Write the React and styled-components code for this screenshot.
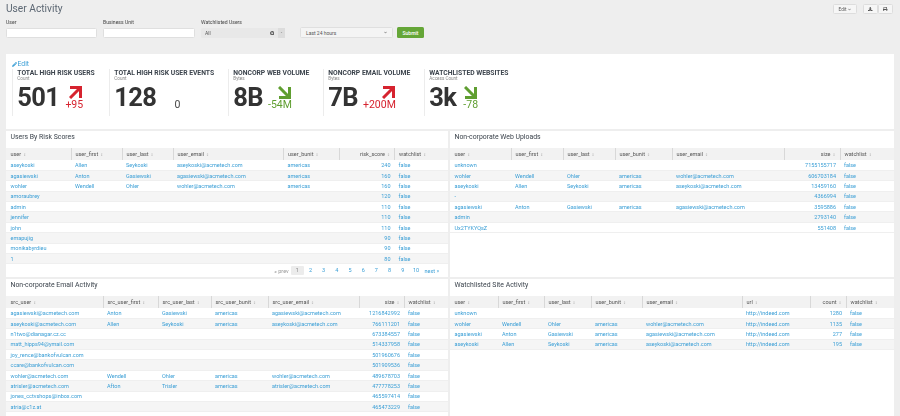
import React from 'react';
import styled, { createGlobalStyle } from 'styled-components';
import { FaPencilAlt, FaDownload, FaPrint, FaTimesCircle, FaChevronDown, FaCaretDown } from 'react-icons/fa';

const GlobalStyle = createGlobalStyle`
  html, body {
    margin: 0;
    height: 416px;
    overflow: hidden;
    background: #eeeeee;
    font-family: Roboto, "Liberation Sans", sans-serif;
  }
`;

const Page = styled.div`
  width: 900px;
  height: 416px;
  overflow: hidden;
  box-sizing: border-box;
  padding: 0 6px;
  filter: blur(0.3px);
`;

const Header = styled.header`
  display: flex;
  justify-content: space-between;
  height: 18px;
`;

const Title = styled.h1`
  margin: 0;
  font-size: 10.2px;
  font-weight: 400;
  line-height: 17px;
  color: #5c6773;
`;

const HeaderActions = styled.div`
  display: flex;
  gap: 6px;
  padding: 4px 1px 0 0;
`;

const GhostButton = styled.button`
  display: flex;
  align-items: center;
  justify-content: center;
  gap: 2px;
  width: ${(p) => p.$w}px;
  height: 10px;
  padding: 0;
  border: 1px solid #dddddd;
  border-radius: 1.5px;
  background: #f6f6f6;
  color: #555555;
  font: 400 4.6px Roboto, sans-serif;
`;

const ButtonGroup = styled.div`
  display: flex;
`;

const FilterBar = styled.form`
  display: flex;
  align-items: flex-end;
  height: 36px;
  padding-top: 3px;
  box-sizing: border-box;
  align-content: flex-start;
`;

const Field = styled.div`
  display: flex;
  flex-direction: column;
  width: ${(p) => p.$w}px;
  margin-right: ${(p) => p.$gap}px;
  padding-bottom: 16px;
`;

const FieldLabel = styled.label`
  height: 6px;
  margin-bottom: 3px;
  font-size: 5.1px;
  line-height: 6px;
  color: #444444;
`;

const TextInput = styled.div`
  height: 10px;
  box-sizing: border-box;
  background: #ffffff;
  border: 1px solid #dfdfdf;
  border-radius: 1.5px;
`;

const SelectRow = styled.div`
  display: flex;
  height: 10.5px;
`;

const MultiSelect = styled.div`
  display: flex;
  flex: 1;
  align-items: center;
  justify-content: space-between;
  padding: 0 4px;
  background: #e8e8e8;
  border-radius: 1.5px 0 0 1.5px;
  font-size: 5px;
  color: #555555;
  svg { color: #555555; }
`;

const CaretBox = styled.div`
  display: flex;
  align-items: center;
  justify-content: center;
  width: 7px;
  background: #dcdcdc;
  color: #888888;
`;

const TimePicker = styled.div`
  display: flex;
  align-items: center;
  justify-content: space-between;
  width: 93px;
  height: 11px;
  box-sizing: border-box;
  margin: 0 4px 16px 15px;
  padding: 0 5px;
  background: #f4f4f4;
  border: 1px solid #dfdfdf;
  border-radius: 1.5px;
  font-size: 5px;
  color: #555555;
`;

const Submit = styled.button`
  width: 27px;
  height: 11px;
  margin-bottom: 16px;
  padding: 0;
  border: 0;
  border-radius: 1.5px;
  background: #65a637;
  color: #ffffff;
  font: 500 5px Roboto, sans-serif;
`;

const KpiPanel = styled.section`
  height: 75px;
  box-sizing: border-box;
  background: #ffffff;
  padding: 5px 0 0 5.5px;
  margin-bottom: 2px;
`;

const EditLink = styled.a`
  display: flex;
  align-items: center;
  gap: 1px;
  height: 10px;
  font-size: 6.8px;
  color: #3b9fd6;
`;

const KpiRow = styled.div`
  display: flex;
`;

const Kpi = styled.div`
  width: ${(p) => p.$w}px;
  height: 47px;
  box-sizing: border-box;
  padding-left: 4.8px;
  border-left: 1px solid #ececec;
`;

const KpiTitle = styled.div`
  font-size: 6.75px;
  line-height: 8px;
  font-weight: 700;
  color: #3c444d;
  white-space: nowrap;
`;

const KpiUnit = styled.div`
  font-size: 4.6px;
  line-height: 4.5px;
  color: #888888;
`;

const KpiBody = styled.div`
  display: flex;
  align-items: flex-end;
`;

const KpiValue = styled.div`
  font-size: 25.5px;
  line-height: 30px;
  font-weight: 700;
  letter-spacing: -0.6px;
  color: #333333;
`;

const Delta = styled.div`
  display: flex;
  flex-direction: column;
  align-items: flex-end;
  margin-left: ${(p) => p.$gap}px;
  padding-bottom: 3px;
  color: ${(p) => p.$color};
  font-size: 10.5px;
  line-height: 9px;
  white-space: nowrap;
  svg { margin: 0 1px 1px 0; }
`;

const Grid = styled.div`
  display: grid;
  grid-template-columns: 442px 444px;
  gap: 2px;
`;

const Panel = styled.section`
  height: 146px;
  background: #ffffff;
  overflow: hidden;
`;

const PanelTitle = styled.h2`
  margin: 0;
  height: 17px;
  padding-left: 4.5px;
  font-size: 6.9px;
  font-weight: 400;
  line-height: 13px;
  color: #3c444d;
`;

const Table = styled.table`
  width: 100%;
  table-layout: fixed;
  border-collapse: collapse;
  font-size: 5.5px;
`;

const HeadCell = styled.th`
  height: 12px;
  padding: 0 4px;
  box-sizing: border-box;
  font-weight: 400;
  color: #555555;
  background: #f2f2f2;
  border-left: 1px solid #d8d8d8;
  text-align: ${(p) => (p.$right ? 'right' : 'left')};
  white-space: nowrap;
  &:first-child { border-left: 0; padding-left: 4.5px; }
`;

const SortMark = styled.span`
  margin-left: 2px;
  font-size: 3.6px;
  color: #aaaaaa;
  font-family: "DejaVu Sans", sans-serif;
`;

const Row = styled.tr`
  background: ${(p) => (p.$odd ? '#f5f5f5' : '#ffffff')};
  border-bottom: 1px solid #efefef;
`;

const Cell = styled.td`
  height: 10.4px;
  padding: 0 4px;
  box-sizing: border-box;
  color: #3b9fd6;
  text-align: ${(p) => (p.$right ? 'right' : 'left')};
  white-space: nowrap;
  overflow: hidden;
  &:first-child { padding-left: 4.5px; }
`;

const Pager = styled.nav`
  display: flex;
  justify-content: flex-end;
  align-items: center;
  height: 13px;
  padding-right: 9px;
  font-size: 5.5px;
  color: #3b9fd6;
`;

const PageItem = styled.a`
  width: 13.2px;
  height: 9px;
  line-height: 9px;
  text-align: center;
  color: ${(p) => (p.$active ? '#888888' : '#3b9fd6')};
  background: ${(p) => (p.$active ? '#ececec' : 'transparent')};
  border-radius: 1px;
`;

const PageLabel = styled.a`
  color: ${(p) => p.$color};
  margin: 0 ${(p) => p.$right}px 0 ${(p) => p.$left}px;
`;

const Arrow = ({ color, down }) => (
  <svg width="13" height="13" viewBox="0 0 13 13">
    {down ? (
      <path d="M1 1 L10.5 10.5 M11.5 1 V11.5 H1" fill="none" stroke={color} strokeWidth="3" />
    ) : (
      <path d="M1 12 L10.5 2.5 M1 1.5 H11.5 V12" fill="none" stroke={color} strokeWidth="3" />
    )}
  </svg>
);

const RED = '#d6232f';
const GREEN = '#5f9e30';

const kpis = [
  { title: 'TOTAL HIGH RISK USERS', unit: 'Count', value: '501', delta: '+95', dir: 'up', w: 97, gap: 6 },
  { title: 'TOTAL HIGH RISK USER EVENTS', unit: 'Count', value: '128', delta: '0', w: 119, gap: 18 },
  { title: 'NONCORP WEB VOLUME', unit: 'Bytes', value: '8B', delta: '-54M', dir: 'down', w: 95, gap: 5 },
  { title: 'NONCORP EMAIL VOLUME', unit: 'Bytes', value: '7B', delta: '+200M', dir: 'up', w: 101, gap: 5 },
  { title: 'WATCHLISTED WEBSITES', unit: 'Access Count', value: '3k', delta: '-78', dir: 'down', w: 120, gap: 7 },
];

const tables = [
  {
    title: 'Users By Risk Scores',
    widths: [65, 51, 51, 110.5, 55.5, 55.5, 53.5],
    cols: ['user', 'user_first', 'user_last', 'user_email', 'user_bunit', 'risk_score', 'watchlist'],
    right: 5,
    pager: true,
    rows: [
      ['aseykoski', 'Allen', 'Seykoski', 'aseykoski@acmetech.com', 'americas', '240', 'false'],
      ['agasiewski', 'Anton', 'Gasiewski', 'agasiewski@acmetech.com', 'americas', '160', 'false'],
      ['wohler', 'Wendell', 'Ohler', 'wohler@acmetech.com', 'americas', '160', 'false'],
      ['amoraubrey', '', '', '', '', '120', 'false'],
      ['admin', '', '', '', '', '110', 'false'],
      ['jennifer', '', '', '', '', '110', 'false'],
      ['john', '', '', '', '', '110', 'false'],
      ['emapujig', '', '', '', '', '90', 'false'],
      ['monikabyrdieu', '', '', '', '', '90', 'false'],
      ['1', '', '', '', '', '80', 'false'],
    ],
  },
  {
    title: 'Non-corporate Web Uploads',
    widths: [61, 52, 52, 57, 112, 56, 54],
    cols: ['user', 'user_first', 'user_last', 'user_bunit', 'user_email', 'size', 'watchlist'],
    right: 5,
    rows: [
      ['unknown', '', '', '', '', '7155155717', 'false'],
      ['wohler', 'Wendell', 'Ohler', 'americas', 'wohler@acmetech.com', '606703184', 'false'],
      ['aseykoski', 'Allen', 'Seykoski', 'americas', 'aseykoski@acmetech.com', '13459160', 'false'],
      ['-', '', '', '', '', '4366994', 'false'],
      ['agasiewski', 'Anton', 'Gasiewski', 'americas', 'agasiewski@acmetech.com', '3595886', 'false'],
      ['admin', '', '', '', '', '2793140', 'false'],
      ['Ux2TYKYQsZ', '', '', '', '', '551408', 'false'],
    ],
  },
  {
    title: 'Non-corporate Email Activity',
    widths: [97, 55, 53, 57, 91, 45, 44],
    cols: ['src_user', 'src_user_first', 'src_user_last', 'src_user_bunit', 'src_user_email', 'size', 'watchlist'],
    right: 5,
    rows: [
      ['agasiewski@acmetech.com', 'Anton', 'Gasiewski', 'americas', 'agasiewski@acmetech.com', '1216842992', 'false'],
      ['aseykoski@acmetech.com', 'Allen', 'Seykoski', 'americas', 'aseykoski@acmetech.com', '766111201', 'false'],
      ['n1two@dianagar.cz.cc', '', '', '', '', '673384557', 'false'],
      ['matt_hipps94@ymail.com', '', '', '', '', '514337958', 'false'],
      ['joy_rence@bankofvulcan.com', '', '', '', '', '501960676', 'false'],
      ['ccare@bankofvulcan.com', '', '', '', '', '501909536', 'false'],
      ['wohler@acmetech.com', 'Wendell', 'Ohler', 'americas', 'wohler@acmetech.com', '489678703', 'false'],
      ['atrisler@acmetech.com', 'Afton', 'Trisler', 'americas', 'atrisler@acmetech.com', '477778253', 'false'],
      ['jones_cctvshops@inbox.com', '', '', '', '', '465597414', 'false'],
      ['atria@c1z.at', '', '', '', '', '465473229', 'false'],
    ],
  },
  {
    title: 'Watchlisted Site Activity',
    widths: [48, 46, 47, 51, 100, 68, 36, 48],
    cols: ['user', 'user_first', 'user_last', 'user_bunit', 'user_email', 'url', 'count', 'watchlist'],
    right: 6,
    rows: [
      ['unknown', '', '', '', '', 'http://indeed.com', '1280', 'false'],
      ['wohler', 'Wendell', 'Ohler', 'americas', 'wohler@acmetech.com', 'http://indeed.com', '1135', 'false'],
      ['agasiewski', 'Anton', 'Gasiewski', 'americas', 'agasiewski@acmetech.com', 'http://indeed.com', '277', 'false'],
      ['aseykoski', 'Allen', 'Seykoski', 'americas', 'aseykoski@acmetech.com', 'http://indeed.com', '195', 'false'],
    ],
  },
];

const DataPanel = ({ title, widths, cols, rows, right, pager }) => (
  <Panel>
    <PanelTitle>{title}</PanelTitle>
    <Table>
      <colgroup>
        {widths.map((w, i) => <col key={i} width={w} />)}
      </colgroup>
      <thead>
        <tr>
          {cols.map((c, i) => (
            <HeadCell key={c} $right={i === right}>{c}<SortMark>↕</SortMark></HeadCell>
          ))}
        </tr>
      </thead>
      <tbody>
        {rows.map((r, i) => (
          <Row key={i} $odd={i % 2 === 1}>
            {r.map((v, j) => <Cell key={j} $right={j === right}>{v}</Cell>)}
          </Row>
        ))}
      </tbody>
    </Table>
    {pager && (
      <Pager>
        <PageLabel $color="#999999" $right={2} $left={0}>« prev</PageLabel>
        {[1, 2, 3, 4, 5, 6, 7, 8, 9, 10].map((n) => (
          <PageItem key={n} $active={n === 1}>{n}</PageItem>
        ))}
        <PageLabel $color="#3b9fd6" $left={2} $right={0}>next »</PageLabel>
      </Pager>
    )}
  </Panel>
);

export default function App() {
  return (
    <>
      <GlobalStyle />
      <Page>
        <Header>
          <Title>User Activity</Title>
          <HeaderActions>
            <GhostButton $w={24}>Edit <FaChevronDown size={3} /></GhostButton>
            <ButtonGroup>
              <GhostButton $w={15}><FaDownload size={4.5} /></GhostButton>
              <GhostButton $w={15}><FaPrint size={4.5} /></GhostButton>
            </ButtonGroup>
          </HeaderActions>
        </Header>
        <FilterBar>
          <Field $w={91} $gap={6}>
            <FieldLabel>User</FieldLabel>
            <TextInput />
          </Field>
          <Field $w={92} $gap={6}>
            <FieldLabel>Business Unit</FieldLabel>
            <TextInput />
          </Field>
          <Field $w={84} $gap={0}>
            <FieldLabel>Watchlisted Users</FieldLabel>
            <SelectRow>
              <MultiSelect>All <FaTimesCircle size={4.5} /></MultiSelect>
              <CaretBox><FaCaretDown size={3} /></CaretBox>
            </SelectRow>
          </Field>
          <TimePicker>Last 24 hours <FaChevronDown size={3} /></TimePicker>
          <Submit type="button">Submit</Submit>
        </FilterBar>
        <KpiPanel>
          <EditLink><FaPencilAlt size={5} />Edit</EditLink>
          <KpiRow>
            {kpis.map((k) => (
              <Kpi key={k.title} $w={k.w}>
                <KpiTitle>{k.title}</KpiTitle>
                <KpiUnit>{k.unit}</KpiUnit>
                <KpiBody>
                  <KpiValue>{k.value}</KpiValue>
                  <Delta $gap={k.gap} $color={k.dir === 'up' ? RED : k.dir === 'down' ? GREEN : '#444444'}>
                    {k.dir && <Arrow color={k.dir === 'up' ? RED : GREEN} down={k.dir === 'down'} />}
                    {k.delta}
                  </Delta>
                </KpiBody>
              </Kpi>
            ))}
          </KpiRow>
        </KpiPanel>
        <Grid>
          {tables.map((t) => <DataPanel key={t.title} {...t} />)}
        </Grid>
      </Page>
    </>
  );
}
